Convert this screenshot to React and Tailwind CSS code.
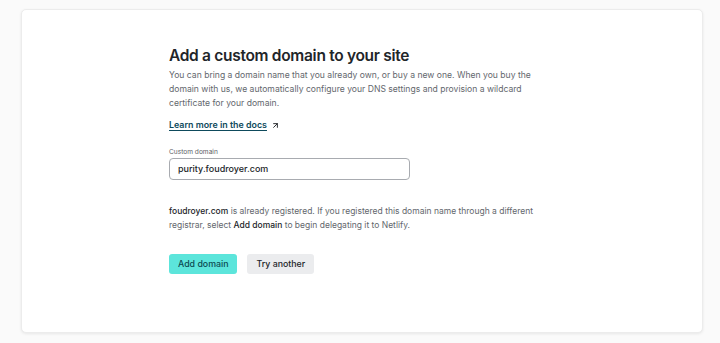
import { ArrowUpRight } from 'lucide-react';

function App() {
  return (
    <div
      className="min-h-screen bg-[#fafafa] pt-[9px] pl-[21px] pr-[17px]"
      style={{ fontFamily: 'Inter, "Noto Sans", sans-serif' }}
    >
      {/* Card */}
      <div className="h-[324px] bg-white rounded-[5px] border border-[#ececec] shadow-[0_1px_3px_rgba(0,0,0,0.08)] pl-[147px] pt-[34px]">
        <div className="w-[380px]">
          <h1 className="text-[15.5px] leading-[24px] font-semibold text-[#222529] tracking-[-0.3px]">
            Add a custom domain to your site
          </h1>
          <p className="mt-[0px] text-[8.6px] leading-[14px] text-[#63676d]">
            You can bring a domain name that you already own, or buy a new one. When you buy the
            domain with us, we automatically configure your DNS settings and provision a wildcard
            certificate for your domain.
          </p>

          <a
            href="#"
            className="mt-[8px] inline-flex items-center gap-[4px] text-[8.9px] leading-[14px] font-semibold text-[#0e4a5c] underline decoration-[1.2px] underline-offset-2"
          >
            Learn more in the docs
            <ArrowUpRight size={9} strokeWidth={2.5} className="text-[#222529]" />
          </a>

          {/* Custom domain field */}
          <div className="mt-[13px]">
            <label className="block text-[6.6px] leading-[10px] text-[#5d6167]">Custom domain</label>
            <div className="mt-[1px] w-[241px] h-[22px] border border-[#a8abb0] rounded-[4px] flex items-center px-[8px]">
              <span className="text-[9px] font-medium text-[#222529]">purity.foudroyer.com</span>
            </div>
          </div>

          <p className="mt-[24px] text-[8.5px] leading-[14px] text-[#63676d]">
            <span className="font-medium text-[#222529]">foudroyer.com</span> is already registered.
            If you registered this domain name through a different registrar, select{' '}
            <span className="font-medium text-[#222529]">Add domain</span> to begin delegating it to
            Netlify.
          </p>

          <div className="mt-[22px] flex gap-[10px]">
            <button className="h-[20px] px-[9px] rounded-[3px] bg-[#5ce5db] text-[8.8px] font-medium text-[#0c4a52]">
              Add domain
            </button>
            <button className="h-[20px] px-[9px] rounded-[3px] bg-[#ebecee] text-[8.8px] font-medium text-[#222529]">
              Try another
            </button>
          </div>
        </div>
      </div>
    </div>
  );
}

export default App;
